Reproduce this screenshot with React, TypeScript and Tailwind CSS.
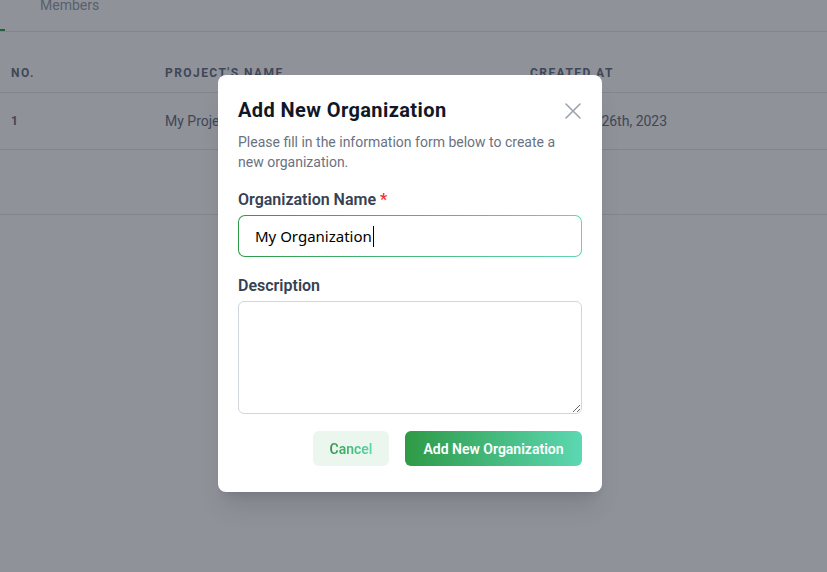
const rows = [{ no: 1, name: "My Project", created: "September 26th, 2023" }];

function CloseIcon() {
  return (
    <svg width="16" height="16" viewBox="0 0 16 16" fill="none">
      <path
        d="M1 1L15 15M15 1L1 15"
        stroke="#9ca3af"
        strokeWidth="1.6"
        strokeLinecap="round"
      />
    </svg>
  );
}

export default function App() {
  return (
    <div className="relative h-[572px] w-[827px] overflow-hidden bg-white font-['Roboto',sans-serif]">
      {/* page underneath */}
      <div className="flex h-[32px] items-start border-b border-gray-200">
        <div className="h-full w-[5px] border-b-2 border-[#34a04a]" />
        <div className="-mt-[5px] ml-[35px] text-sm text-gray-400">
          Members
        </div>
      </div>

      <div className="mt-[22px] flex h-[39px] items-center border-b border-gray-200 pl-[11px] text-xs font-bold uppercase tracking-[0.12em] text-gray-500">
        <div className="w-[154px]">No.</div>
        <div className="w-[365px]">Project's Name</div>
        <div>Created At</div>
      </div>
      {rows.map((r) => (
        <div
          key={r.no}
          className="flex h-[57px] items-center border-b border-gray-200 pl-[11px] text-sm text-gray-500"
        >
          <div className="w-[154px] text-xs font-bold">{r.no}</div>
          <div className="w-[365px]">{r.name}</div>
          <div>{r.created}</div>
        </div>
      ))}
      <div className="h-[65px] border-b border-gray-200" />

      {/* overlay */}
      <div className="absolute inset-0 bg-[#111827]/[0.47]" />

      {/* modal */}
      <div className="absolute left-[218px] top-[75px] w-[384px] rounded-lg bg-white px-5 pb-[26px] pt-[21px] shadow-xl">
        <div className="flex items-center justify-between">
          <h2 className="text-xl font-bold leading-7 tracking-[0.02em] text-gray-900">
            Add New Organization
          </h2>
          <button className="mr-[1px] mt-[1px]">
            <CloseIcon />
          </button>
        </div>
        <p className="mt-2 text-sm leading-5 text-gray-500">
          Please fill in the information form below to create a new
          organization.
        </p>

        <label className="mt-4 block text-base font-semibold leading-6 text-gray-700">
          Organization Name <span className="text-red-500">*</span>
        </label>
        <div className="mt-[3px] rounded-[7px] bg-gradient-to-r from-[#2f9a45] to-[#60d7b0] p-px">
          <div className="flex h-[40px] w-full items-center rounded-[6px] bg-white px-4 font-['Noto_Sans',sans-serif] text-[15px] text-black">
            My Organization
            <span className="ml-px inline-block h-[21px] w-px bg-black" />
          </div>
        </div>

        <label className="mt-[17px] block text-base font-semibold leading-6 text-gray-700">
          Description
        </label>
        <textarea className="mt-[3px] block h-[113px] w-full rounded-md border border-gray-300 bg-white px-4 py-2 text-base outline-none" />

        <div className="mt-[17px] flex justify-end gap-4">
          <button className="h-[35px] w-[76px] rounded-md bg-[#eaf6ee] text-sm font-semibold">
            <span className="bg-gradient-to-r from-[#2f9a45] to-[#60d7b0] bg-clip-text text-transparent">
              Cancel
            </span>
          </button>
          <button className="h-[35px] w-[177px] rounded-md bg-gradient-to-r from-[#2f9a45] to-[#5cd8b2] text-sm font-semibold text-white">
            Add New Organization
          </button>
        </div>
      </div>
    </div>
  );
}
